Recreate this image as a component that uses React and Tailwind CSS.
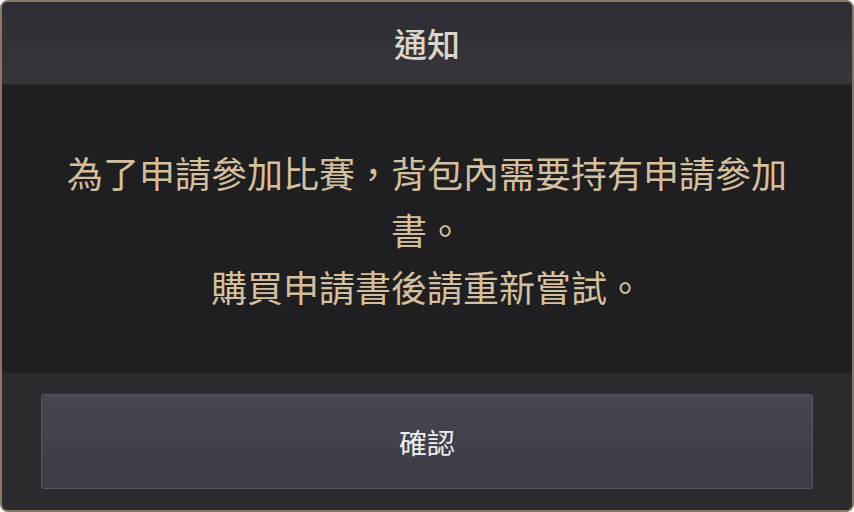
const App = () => {
  const font = { fontFamily: '"Noto Sans CJK TC", "Noto Sans CJK SC", sans-serif' };

  return (
    <div
      className="w-[854px] h-[512px] bg-[#1e1e20] border-2 border-[#857865] rounded-lg overflow-hidden flex flex-col"
      style={font}
    >
      <div className="h-[83px] shrink-0 flex items-center justify-center bg-gradient-to-b from-[#2e2d33] to-[#37363c] border-b border-[#2a292e]">
        <span className="text-[33px] leading-none font-medium text-[#dcd6ca]">通知</span>
      </div>
      <div className="flex-1 flex flex-col items-center justify-center px-[60px] bg-[#1f1f21] text-[#d4c09f] text-[36px] leading-[57px] text-center">
        <p>為了申請參加比賽，背包內需要持有申請參加書。</p>
        <p>購買申請書後請重新嘗試。</p>
      </div>
      <div className="h-[137px] shrink-0 bg-[#2b2a2f] px-[39px] py-[21px]">
        <button className="w-full h-full rounded-[3px] border border-[#575662] bg-gradient-to-b from-[#474651] to-[#3d3c45] text-[28px] text-[#ededed]">
          確認
        </button>
      </div>
    </div>
  );
};

export default App;
